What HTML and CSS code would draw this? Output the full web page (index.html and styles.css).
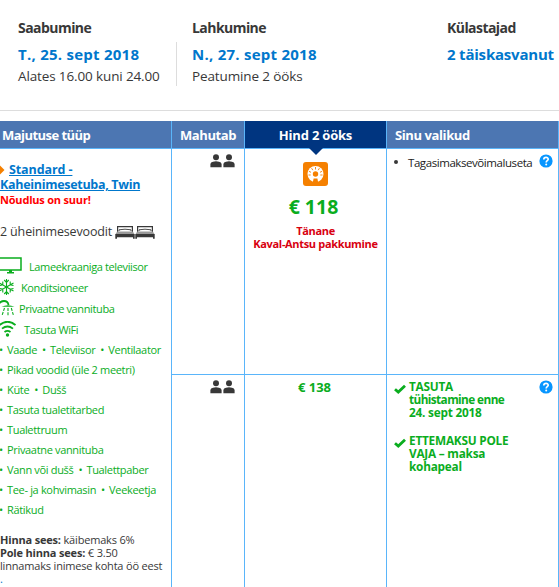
FILE: index.html
```html
<!DOCTYPE html>
<html lang="et">
<head>
  <meta charset="UTF-8" />
  <meta name="viewport" content="width=device-width, initial-scale=1.0"/>
  <title>Broneering</title>
  <link rel="stylesheet" href="styles.css">
</head>
<body>
  <svg class="sprite">
    <symbol id="people" viewBox="0 0 25 14">
      <circle cx="6" cy="3.2" r="3"/><path d="M0.4 13.2V10Q0.6 8.4 3 7.8Q6 6.8 9 7.8Q11.4 8.4 11.6 10V13.2Z"/>
      <circle cx="19" cy="3.2" r="3"/><path d="M13.4 13.2V10Q13.6 8.4 16 7.8Q19 6.8 22 7.8Q24.4 8.4 24.6 10V13.2Z"/>
    </symbol>
    <symbol id="bed" viewBox="0 0 20 13">
      <path d="M2.6 8V.7H17.4V8" fill="none" stroke="currentColor" stroke-width="1.2"/>
      <path d="M4 5V3.8Q10 2.6 16 3.8V5" fill="none" stroke="currentColor" stroke-width=".9"/>
      <path d="M2.2 5.4H17.8L19.6 8.2H.4Z" fill="#999"/>
      <path d="M.3 8H19.7V12.8H18V11.2H2V12.8H.3Z"/>
    </symbol>
    <symbol id="help" viewBox="0 0 14 14">
      <circle cx="7" cy="7" r="6.6" fill="#0896ff"/>
      <path d="M4.8 5.4C4.8 2.6 9.3 2.7 9.2 5.3C9.1 6.7 7.2 6.7 7.2 8.4" fill="none" stroke="#fff" stroke-width="1.7"/>
      <circle cx="7.2" cy="10.5" r="1" fill="#fff"/>
    </symbol>
    <symbol id="check" viewBox="0 0 12 10"><path d="M1 5.2L4.3 8.1L11 1.8" fill="none" stroke="currentColor" stroke-width="2.8"/></symbol>
  </svg>

  <div class="summary">
    <div class="summary-item arrival">
      <h3>Saabumine</h3>
      <div class="date">T., 25. sept 2018</div>
      <div class="note">Alates 16.00 kuni 24.00</div>
    </div>
    <div class="summary-item departure">
      <h3>Lahkumine</h3>
      <div class="date">N., 27. sept 2018</div>
      <div class="note">Peatumine 2 ööks</div>
    </div>
    <div class="summary-item guests">
      <h3>Külastajad</h3>
      <div class="date">2 täiskasvanut</div>
    </div>
  </div>

  <div class="rooms">
    <div class="head">Majutuse tüüp</div>
    <div class="head">Mahutab</div>
    <div class="head active">Hind 2 ööks</div>
    <div class="head last">Sinu valikud</div>

    <div class="cell room">
      <div class="room-name">
        <div><svg class="marker" viewBox="0 0 5 10"><path d="M0 .5L4.5 5L0 9.5Z"/></svg><a>Standard -</a></div>
        <div><a class="long">Kaheinimesetuba, Twin</a></div>
      </div>
      <div class="demand">Nõudlus on suur!</div>
      <div class="beds"><span>2 üheinimesevoodit</span><svg><use href="#bed"/></svg><svg><use href="#bed"/></svg></div>
      <div class="facilities">
        <div class="facility tv">
          <svg viewBox="0 0 22 17"><path d="M-1 1H21V13H-1Z" fill="none" stroke="currentColor" stroke-width="1.5"/><path d="M9 13H12V15H14V16.5H7V15H9Z"/></svg>
          <span>Lameekraaniga televiisor</span>
        </div>
        <div class="facility air">
          <svg viewBox="0 0 14 16"><path d="M6.5 0V16M-.5 4L13.5 12M-.5 12L13.5 4M4.2 1L6.5 3.4L8.8 1M4.2 15L6.5 12.6L8.8 15M2.8 2.5L2.8 5.8L0 6.5M10.2 2.5L10.2 5.8L13.5 6.5M2.8 13.5L2.8 10.2L0 9.5M10.2 13.5L10.2 10.2L13.5 9.5" fill="none" stroke="currentColor" stroke-width="1.1"/></svg>
          <span>Konditsioneer</span>
        </div>
        <div class="facility bath">
          <svg viewBox="0 0 15 16"><path d="M-1 3.5Q1 1 4 1Q8 1 8.5 5" fill="none" stroke="currentColor" stroke-width="1.8"/><path d="M1.5 6.8Q8 3.5 14.5 6.8Z"/><path d="M4.5 8L2 15.5M8 8V15.5M11.3 8L13.5 15.5" fill="none" stroke="currentColor" stroke-width="1.1" stroke-dasharray="3 1.2"/></svg>
          <span>Privaatne vannituba</span>
        </div>
        <div class="facility wifi">
          <svg viewBox="0 0 16 16"><path d="M-.5 4Q7.5-2.5 15.5 4M2 7.6Q7.5 3.3 13 7.6M4.5 11Q7.5 8.8 10.5 11" fill="none" stroke="currentColor" stroke-width="1.8"/><circle cx="7.5" cy="14" r="1.7"/></svg>
          <span>Tasuta WiFi</span>
        </div>
      </div>
      <ul class="amenities">
        <li><span>Vaade</span><span>Televiisor</span><span>Ventilaator</span></li>
        <li><span>Pikad voodid (üle 2 meetri)</span></li>
        <li><span>Küte</span><span>Dušš</span></li>
        <li><span>Tasuta tualetitarbed</span></li>
        <li><span>Tualettruum</span></li>
        <li><span>Privaatne vannituba</span></li>
        <li><span>Vann või dušš</span><span>Tualettpaber</span></li>
        <li><span>Tee- ja kohvimasin</span><span>Veekeetja</span></li>
        <li><span>Rätikud</span></li>
      </ul>
      <div class="taxes">
        <div><b>Hinna sees:</b> käibemaks 6%</div>
        <div><b>Pole hinna sees:</b> € 3.50</div>
        <div>linnamaks inimese kohta öö eest</div>
        <div class="dot">.</div>
      </div>
    </div>

    <div class="cell people"><svg><use href="#people"/></svg></div>
    <div class="cell price deal">
      <svg class="deal-icon" viewBox="0 0 25 24">
        <rect width="25" height="24" rx="3" fill="#f58000"/>
        <circle cx="12.5" cy="12" r="8" fill="#fff"/>
        <path d="M12.5 5V7.5M8.6 6.2L9.8 8.2M16.4 6.2L15.2 8.2M5.9 9.3L8 10.3M19.1 9.3L17 10.3M5.5 13H7.7M19.5 13H17.3" stroke="#f58000" stroke-width=".9"/>
        <circle cx="12.5" cy="12" r="2.7" fill="#f58000"/>
        <path d="M10.6 16.5H14.4L15.2 20.5H9.8Z" fill="#f58000"/>
      </svg>
      <div class="amount">€ 118</div>
      <div class="deal-text"><div>Tänane</div><div>Kaval-Antsu pakkumine</div></div>
    </div>
    <div class="cell options last">
      <div class="option"><span class="bullet"></span><span>Tagasimaksevõimaluseta</span></div>
      <svg class="help"><use href="#help"/></svg>
    </div>

    <div class="cell people second"><svg><use href="#people"/></svg></div>
    <div class="cell price second"><div class="amount small">€ 138</div></div>
    <div class="cell options last second">
      <div class="benefits">
        <div class="benefit">
          <svg><use href="#check"/></svg>
          <div><div>TASUTA</div><div class="tight">tühistamine enne</div><div>24. sept 2018</div></div>
        </div>
        <div class="benefit">
          <svg><use href="#check"/></svg>
          <div><div>ETTEMAKSU POLE</div><div>VAJA – maksa</div><div>kohapeal</div></div>
        </div>
      </div>
      <svg class="help"><use href="#help"/></svg>
    </div>
  </div>
</body>
</html>
```

FILE: styles.css
```css
* {
  box-sizing: border-box;
}

body {
  margin: 0;
  height: 587px;
  overflow: hidden;
  background: #fff;
  color: #383838;
  font-family: "Open Sans", "Noto Sans", sans-serif;
  font-size: 11px;
  white-space: nowrap;
}

svg {
  display: block;
  flex: none;
  fill: currentColor;
}

.sprite {
  display: none;
}

.summary {
  display: flex;
  height: 111px;
  padding: 18px 0 0 18px;
  border-bottom: 1px solid #ddd;
}

.arrival {
  width: 174px;
  height: 68px;
  background: linear-gradient(#ddd, #ddd) 158px 24px / 1px 44px no-repeat;
}

.departure {
  width: 255px;
}

h3 {
  margin: 0 0 6px;
  font-size: 14px;
  line-height: 20px;
  letter-spacing: -0.55px;
}

.date {
  color: #0077cc;
  font-size: 15px;
  font-weight: bold;
  line-height: 20px;
  margin-bottom: 2px;
  letter-spacing: 0.25px;
}

.guests .date {
  letter-spacing: -0.2px;
}

.note {
  font-size: 13.5px;
  line-height: 20px;
  letter-spacing: -0.13px;
}

.rooms {
  display: grid;
  grid-template-columns: 171px 73px 142px 173px;
  grid-template-rows: 28px 225px 213px;
  margin-top: 10px;
}

.head {
  padding-left: 8px;
  background: #4c76b2;
  border-left: 1px solid #5ab5fa;
  border-bottom: 1px solid #5ab5fa;
  color: #fff;
  font-size: 13px;
  font-weight: bold;
  line-height: 28px;
  letter-spacing: -0.4px;
}

.head:first-child {
  padding-left: 2px;
  border-left: none;
  letter-spacing: -0.55px;
}

.active {
  position: relative;
  padding: 0;
  background: #003580;
  text-align: center;
  letter-spacing: -0.2px;
}

.active::after {
  content: "";
  position: absolute;
  top: 27px;
  left: 64px;
  border: 7px solid transparent;
  border-top-color: #003580;
  border-bottom: none;
}

.cell {
  border-left: 1px solid #5ab5fa;
}

.last {
  border-right: 1px solid #5ab5fa;
}

.second {
  border-top: 1px solid #5ab5fa;
}

.room {
  grid-row: 2 / 4;
  padding-top: 13px;
  border-left: none;
}

.room-name {
  color: #0077cc;
  font-size: 12.5px;
  font-weight: bold;
  line-height: 15px;
  letter-spacing: -0.1px;
}

.room-name a {
  text-decoration: underline;
}

.room-name .long {
  letter-spacing: -0.3px;
}

.room-name div {
  display: flex;
  align-items: center;
}

.marker {
  width: 5px;
  height: 10px;
  margin-right: 4px;
  color: #f58000;
}

.demand {
  color: #f00;
  font-weight: bold;
  line-height: 16px;
  letter-spacing: -0.2px;
}

.beds {
  display: flex;
  align-items: center;
  margin-top: 14px;
  font-size: 12.5px;
  line-height: 20px;
}

.beds span {
  width: 115px;
  letter-spacing: -0.15px;
}

.beds svg {
  width: 20px;
  height: 13px;
}

.facilities {
  margin-top: 13px;
  color: #0aad1e;
}

.facility {
  display: flex;
  align-items: center;
  height: 21px;
}

.facility span {
  padding-top: 2px;
  letter-spacing: -0.38px;
}

.facility svg {
  width: 16px;
  height: 16px;
  margin-right: 8px;
}

.tv svg {
  width: 22px;
  height: 17px;
  margin-right: 7px;
}

.air svg {
  width: 14px;
  margin-right: 7px;
}

.bath svg {
  width: 15px;
  margin-right: 4px;
}

.amenities {
  margin: 1px 0 0;
  padding: 0;
  list-style: none;
  color: #0aad1e;
  line-height: 20px;
  letter-spacing: -0.33px;
}

.amenities span {
  margin-right: 6px;
}

.amenities span::before {
  content: "•";
  display: inline-block;
  width: 8px;
  margin-left: -1px;
}

.taxes {
  margin-top: 13px;
  line-height: 13px;
  letter-spacing: -0.18px;
}

.dot {
  color: #0077cc;
}

.people {
  display: flex;
  justify-content: flex-end;
  padding: 5px 9px 0 0;
}

.people svg {
  width: 25px;
  height: 14px;
}

.price {
  text-align: center;
}

.deal {
  padding-top: 13px;
}

.deal-icon {
  width: 25px;
  height: 24px;
  margin: 0 auto;
}

.amount {
  margin: 8px 4px 0 0;
  color: #0aad1e;
  font-size: 19.5px;
  font-weight: bold;
  line-height: 26px;
}

.amount.small {
  margin: 4px 2px 0 0;
  font-size: 13px;
  line-height: 16px;
}

.deal-text {
  margin-top: 4px;
  color: #d8000f;
  font-weight: bold;
  line-height: 13px;
  letter-spacing: -0.33px;
}

.options {
  display: flex;
  justify-content: space-between;
  padding: 5px 5px 0 7px;
}

.option {
  display: flex;
  align-items: center;
  height: 16px;
  color: #222;
  font-size: 11.5px;
  letter-spacing: -0.43px;
}

.bullet {
  width: 4px;
  height: 4px;
  margin-right: 10px;
  border-radius: 50%;
  background: #383838;
}

.help {
  width: 14px;
  height: 14px;
}

.benefit {
  display: flex;
  margin-bottom: 14px;
  color: #0aad1e;
  font-size: 11.8px;
  font-weight: bold;
  line-height: 13.2px;
  letter-spacing: -0.22px;
}

.benefit .tight {
  letter-spacing: -0.6px;
}

.benefit svg {
  width: 12px;
  height: 10px;
  margin: 4px 3px 0 0;
}
```
